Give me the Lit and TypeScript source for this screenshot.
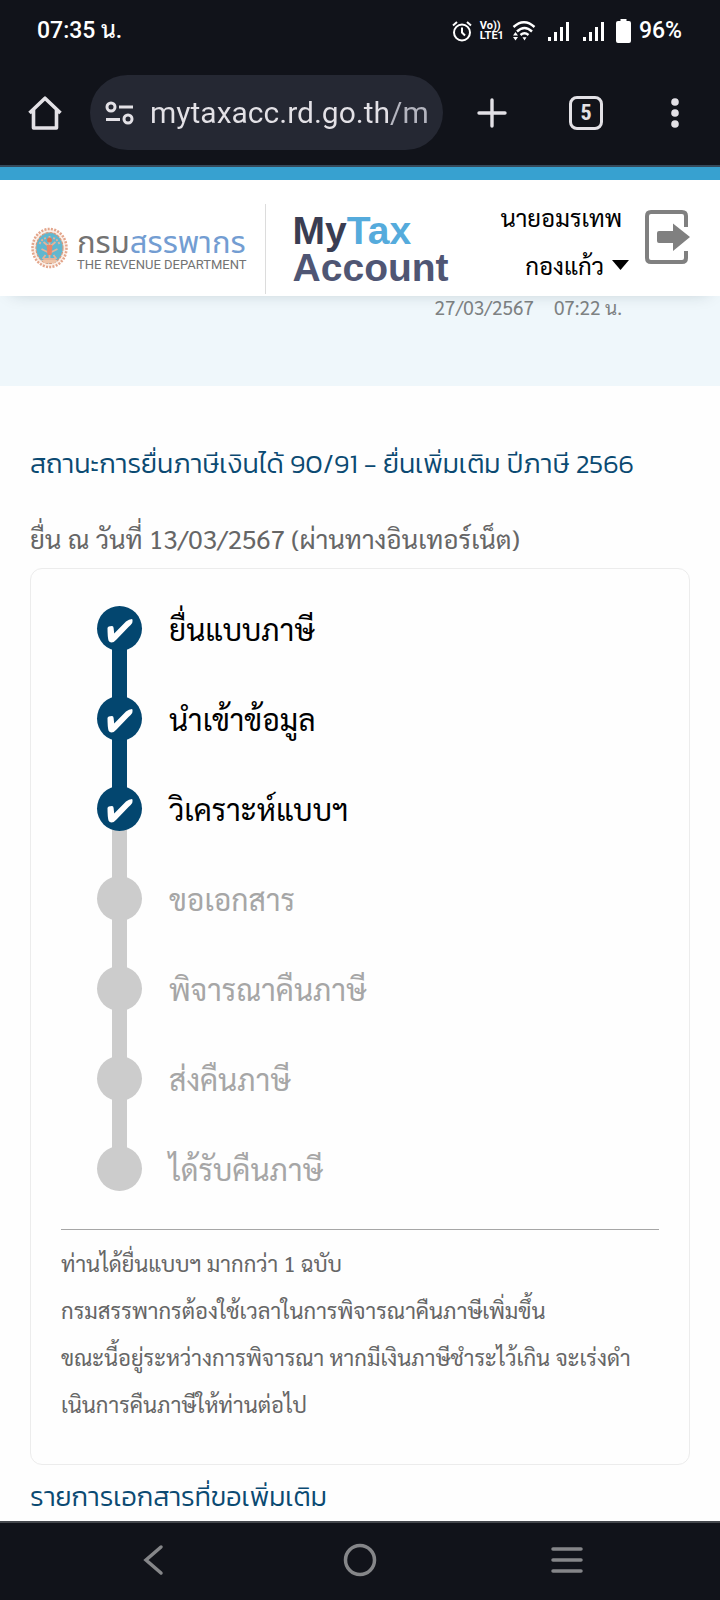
import { LitElement, html, css, svg, nothing } from "lit";
import { customElement, property } from "lit/decorators.js";
import { classMap } from "lit/directives/class-map.js";

const signal = () => svg`
  <rect x="0" y="15" width="3" height="4"></rect>
  <rect x="6" y="10" width="3" height="9"></rect>
  <rect x="12" y="5" width="3" height="14"></rect>
  <rect x="18" y="0" width="3" height="19"></rect>`;

@customElement("status-bar")
class StatusBar extends LitElement {
  static styles = css`
    :host {
      display: flex;
      align-items: center;
      height: 60px;
      padding: 2px 38px 0 37px;
      box-sizing: border-box;
      color: #fff;
      font: 500 23px/28px Roboto, "Sarabun", "Noto Sans Thai Looped", sans-serif;
    }
    .time { flex: 1; }
    .icons { display: flex; align-items: center; gap: 8px; }
    .pair { display: flex; gap: 14px; margin: 0 4px 0 4px; }
    svg { display: block; fill: #fff; }
    .line { fill: none; stroke: #fff; }
    .volte {
      display: grid;
      font: 700 11px/10px Roboto, sans-serif;
    }
  `;
  render() {
    return html`
      <span class="time">07:35 น.</span>
      <div class="icons">
        <svg class="line" width="20" height="21" viewBox="0 0 20 21" stroke-width="2">
          <circle cx="10" cy="11.5" r="8"></circle>
          <path d="M10 6.500v5l3 3M1 4.500 5 1M19 4.500 15 1"></path>
        </svg>
        <div class="volte"><span>Vo))</span><span>LTE1</span></div>
        <svg width="24" height="20" viewBox="0 0 24 20">
          <g fill="none" stroke="#fff" stroke-width="2.400">
            <path d="M1.500 6Q12-3.500 22.500 6M5 10.500Q12.500 3.500 20 10.500M8.500 14Q12.500 10.500 16.500 14"></path>
          </g>
          <path d="M10.500 16.200h4l-2 3.300zM1 14.500 3.500 11 6 14.500zM1 16 3.500 19.500 6 16z"></path>
        </svg>
        <div class="pair">
          <svg width="21" height="19" viewBox="0 0 21 19">${signal()}</svg>
          <svg width="21" height="19" viewBox="0 0 21 19">${signal()}</svg>
        </div>
        <svg width="15" height="24" viewBox="0 0 15 24"><path d="M4.500 0h6v2H13q2 0 2 2v18q0 2-2 2H2q-2 0-2-2V4q0-2 2-2h2.500z"></path></svg>
        <span>96%</span>
      </div>
    `;
  }
}

@customElement("browser-bar")
class BrowserBar extends LitElement {
  static styles = css`
    :host {
      display: flex;
      align-items: center;
      height: 107px;
      padding: 0 16px;
      box-sizing: border-box;
      border-bottom: 2px solid #35495a;
      background: #11131a;
    }
    button {
      flex: none;
      display: grid;
      place-items: center;
      padding: 0;
      border: 0;
      background: none;
      color: #e3e1e6;
    }
    .icon { width: 58px; height: 60px; }
    .tabs { margin: 0 43px 0 48px; }
    .count {
      display: grid;
      place-items: center;
      width: 34px;
      height: 34px;
      box-sizing: border-box;
      border: 3px solid #e3e1e6;
      border-radius: 8px;
      font: 700 22px/28px "Roboto Condensed", Roboto, sans-serif;
    }
    .address {
      flex: 1;
      min-width: 0;
      display: flex;
      align-items: center;
      gap: 16px;
      height: 75px;
      margin: 0 20px 0 16px;
      padding: 0 12px 0 15px;
      border-radius: 38px;
      background: #252833;
      box-sizing: border-box;
    }
    .address svg { flex: none; }
    input {
      flex: 1;
      min-width: 0;
      padding: 0;
      border: 0;
      outline: 0;
      height: 40px;
      font: 400 30px/40px Roboto, sans-serif;
      color: transparent;
      background: linear-gradient(90deg, #e3e1e6 240px, #b4b5bf 242px);
      background-clip: text;
      -webkit-background-clip: text;
    }
    svg { display: block; fill: none; stroke: #e3e1e6; stroke-width: 3; }
    .dots { fill: #e3e1e6; stroke: none; }
  `;
  render() {
    return html`
      <button class="icon" aria-label="หน้าแรก">
        <svg width="34" height="34" viewBox="0 0 34 34"><path stroke-width="3.600" d="M1.500 17 17 2.200 32.500 17M5.500 14v18h23V14" stroke-linejoin="round"></path></svg>
      </button>
      <div class="address">
        <svg width="29" height="24" viewBox="0 0 29 24">
          <circle cx="6" cy="6" r="4"></circle><path d="M14 6h14M1 18.500h14"></path><circle cx="23" cy="18" r="4"></circle>
        </svg>
        <input type="text" aria-label="ที่อยู่เว็บ" value="mytaxacc.rd.go.th/m" />
      </div>
      <button class="icon" aria-label="แท็บใหม่">
        <svg width="30" height="30" viewBox="0 0 30 30" stroke-linecap="round"><path stroke-width="3.400" d="M2 15h26M15 2v26"></path></svg>
      </button>
      <button class="tabs" aria-label="แท็บ"><span class="count">5</span></button>
      <button class="icon" aria-label="เมนู">
        <svg class="dots" width="8" height="30" viewBox="0 0 8 30"><circle cx="4" cy="4" r="3.800"></circle><circle cx="4" cy="15" r="3.800"></circle><circle cx="4" cy="26" r="3.800"></circle></svg>
      </button>
    `;
  }
}

@customElement("site-header")
class SiteHeader extends LitElement {
  static styles = css`
    :host {
      position: relative;
      display: flex;
      height: 129px;
      padding: 0 30px;
      box-sizing: border-box;
      border-top: 13px solid #37a1d0;
      background: #fff;
      box-shadow: 0 8px 16px -12px rgba(0, 40, 50, 0.25);
    }
    .brand { display: flex; align-items: center; gap: 8px; padding-top: 20px; }
    .names { display: grid; padding-top: 8px; }
    .thai {
      font: 400 31px/26px "Noto Sans Thai", sans-serif;
      color: #737373;
      white-space: nowrap;
    }
    .thai b { font-weight: 400; color: #739dd2; }
    .eng { font: 400 13px/16px Roboto, sans-serif; color: #737373; white-space: nowrap; }
    .product {
      margin: 24px 0 2px 18px;
      padding: 8px 0 0 27px;
      border-left: 1px solid #dcdcdc;
      font: 700 39px/37px "Liberation Sans", sans-serif;
      color: #4f5674;
    }
    .my { color: #3a3d52; }
    .tax { color: #55abdc; }
    .user {
      flex: 1;
      display: grid;
      justify-items: end;
      align-content: start;
      padding: 13px 0 0;
      border: 0;
      background: none;
      font: 400 24px/48px "Sarabun", "Noto Sans Thai Looped", "Noto Sans Thai", sans-serif;
      color: #000;
      white-space: nowrap;
    }
    .first { padding-right: 7px; }
    .last { display: flex; align-items: center; gap: 8px; }
    .exit { align-self: flex-start; padding: 30px 0 0; margin-left: 16px; border: 0; background: none; }
    svg { display: block; }
  `;
  render() {
    return html`
      <div class="brand">
        <svg width="39" height="42" viewBox="0 0 38 42">
          <ellipse cx="19" cy="21" rx="17" ry="19" fill="#fbeee6" stroke="#e3a58b" stroke-width="2.500" stroke-dasharray="2 1.300"></ellipse>
          <ellipse cx="19" cy="21" rx="13.500" ry="15.500" fill="#60b7d0" stroke="#d99a7c" stroke-width="1.200" stroke-dasharray="3 1"></ellipse>
          <g fill="none" stroke="#e5b39a" stroke-width="1.800">
            <path d="M19 9v22M13 15l6 5 6-5M11 22l8 4 8-4M13 32h12M15 28l-3 4M23 28l3 4"></path>
            <path d="M9 17q3-6 7-6M29 17q-3-6-7-6" stroke-dasharray="2 1.500"></path>
          </g>
          <circle cx="19" cy="13" r="2.500" fill="#d87a5b"></circle>
          <path d="M16 18h6l-1 10h-4z" fill="#e9876a"></path>
          <path d="M11 33h16l-3 3H14z" fill="#efc4a8"></path>
        </svg>
        <div class="names">
          <span class="thai">กรม<b>สรรพากร</b></span>
          <span class="eng">THE REVENUE DEPARTMENT</span>
        </div>
      </div>
      <div class="product"><span class="my">My</span><span class="tax">Tax</span><br />Account</div>
      <button class="user">
        <span class="first">นายอมรเทพ</span>
        <span class="last">กองแก้ว
          <svg width="17" height="10" viewBox="0 0 17 10"><path d="M0 0h17L8.500 10z"></path></svg>
        </span>
      </button>
      <button class="exit" aria-label="ออกจากระบบ">
        <svg width="45" height="54" viewBox="0 0 45 54">
          <path d="M41 17V6q0-4-4-4H6Q2 2 2 6v42q0 4 4 4h31q4 0 4-4V41" fill="none" stroke="#808080" stroke-width="4"></path>
          <path d="M14 21h14v-7.500L45 27 28 41v-8H14q-2 0-2-2v-8q0-2 2-2z" fill="#808080"></path>
        </svg>
      </button>
    `;
  }
}

@customElement("status-step")
class StatusStep extends LitElement {
  @property() label = "";
  @property({ type: Boolean }) done = false;
  @property({ type: Boolean }) linked = false;
  @property({ type: Boolean }) last = false;

  static styles = css`
    :host { display: flex; gap: 27px; }
    .rail { display: flex; flex-direction: column; align-items: center; width: 45px; }
    .dot {
      position: relative;
      z-index: 1;
      display: grid;
      place-items: center;
      width: 45px;
      height: 45px;
      border-radius: 50%;
      background: #ccc;
    }
    .link { width: 15px; height: 51px; margin: -3px 0; background: #ccc; }
    .done, .linked { background: #03466f; }
    .label {
      font: 400 30px/45px "Sarabun", "Noto Sans Thai Looped", "Noto Sans Thai", sans-serif;
      color: #a6a6a6;
    }
    .active { color: #000; }
  `;
  render() {
    return html`
      <div class="rail">
        <span class=${classMap({ dot: true, done: this.done })}>
          ${this.done
            ? html`<svg width="26" height="29" viewBox="0 -5 26 29"><path fill="#fff" d="M.5 9Q.8 7.200 5 7 6.500 7 6.600 9L7.200 14.500 19 2.500Q22 0 25 0 26 .5 25.200 4 24 6 21.500 8L9.500 20.500Q7 23.500 4.500 23.500 2.500 23.500 1.500 21.500.5 18 .5 9z"></path></svg>`
            : nothing}
        </span>
        ${this.last ? nothing : html`<span class=${classMap({ link: true, linked: this.linked })}></span>`}
      </div>
      <span class=${classMap({ label: true, active: this.done })}>${this.label}</span>
    `;
  }
}

@customElement("app-root")
class AppRoot extends LitElement {
  private steps = [
    { label: "ยื่นแบบภาษี", done: true },
    { label: "นำเข้าข้อมูล", done: true },
    { label: "วิเคราะห์แบบฯ", done: true },
    { label: "ขอเอกสาร", done: false },
    { label: "พิจารณาคืนภาษี", done: false },
    { label: "ส่งคืนภาษี", done: false },
    { label: "ได้รับคืนภาษี", done: false },
  ];

  static styles = css`
    :host {
      display: flex;
      flex-direction: column;
      min-height: 100vh;
      background: #11131a;
      --text: "Sarabun", "Noto Sans Thai Looped", "Noto Sans Thai", sans-serif;
      --head: "Kanit", "Prompt", "Noto Sans Thai", sans-serif;
    }
    .band {
      height: 90px;
      padding: 0 98px 0 30px;
      box-sizing: border-box;
      background: #eff7fb;
      color: #7e8283;
      font: 400 19px/22px var(--text);
      text-align: right;
    }
    .band time + time { margin-left: 20px; }
    main { flex: 1; padding: 0 30px; background: #fefefe; color: #666; }
    h1, h2 { margin: 0; color: #0b4a72; font: 300 27px/40px var(--head); }
    h1 { padding-top: 58px; }
    .filed { margin: 0; padding: 32px 0 8px; font: 400 26px/44px var(--text); }
    .card {
      padding: 37px 30px 36px;
      border: 1px solid #ececec;
      border-radius: 12px;
    }
    .steps { display: grid; margin: 0; padding: 0 0 0 36px; list-style: none; }
    hr { margin: 38px 0 10px; border: 0; border-top: 1px solid #a6a6a6; }
    .note { margin: 0; font: 400 22px/47px var(--text); }
    h2 { padding-top: 12px; }
    nav {
      display: flex;
      justify-content: space-around;
      align-items: center;
      height: 79px;
      padding: 0 50px 4px;
      box-sizing: border-box;
      border-top: 2px solid #45484d;
    }
    nav button { display: grid; place-items: center; width: 60px; height: 60px; padding: 0; border: 0; background: none; }
    nav svg { fill: none; stroke: #858689; stroke-width: 3.500; stroke-linecap: round; }
  `;

  render() {
    return html`
      <status-bar></status-bar>
      <browser-bar></browser-bar>
      <site-header></site-header>
      <div class="band"><time>27/03/2567</time><time>07:22 น.</time></div>
      <main>
        <h1>สถานะการยื่นภาษีเงินได้ 90/91 - ยื่นเพิ่มเติม ปีภาษี 2566</h1>
        <p class="filed">ยื่น ณ วันที่ 13/03/2567 (ผ่านทางอินเทอร์เน็ต)</p>
        <section class="card">
          <ol class="steps">
            ${this.steps.map(
              (s, i, all) => html`<li><status-step
                .label=${s.label}
                .done=${s.done}
                .linked=${s.done && !!all[i + 1]?.done}
                .last=${i === all.length - 1}
              ></status-step></li>`,
            )}
          </ol>
          <hr />
          <p class="note">ท่านได้ยื่นแบบฯ มากกว่า 1 ฉบับ<br />กรมสรรพากรต้องใช้เวลาในการพิจารณาคืนภาษีเพิ่มขึ้น<br />ขณะนี้อยู่ระหว่างการพิจารณา หากมีเงินภาษีชำระไว้เกิน จะเร่งดำ<br />เนินการคืนภาษีให้ท่านต่อไป</p>
        </section>
        <h2>รายการเอกสารที่ขอเพิ่มเติม</h2>
      </main>
      <nav>
        <button aria-label="ย้อนกลับ"><svg width="22" height="32" viewBox="0 0 22 32"><path d="M19 3 4 16l15 13"></path></svg></button>
        <button aria-label="หน้าหลัก"><svg width="34" height="34" viewBox="0 0 34 34"><circle cx="17" cy="17" r="14.500"></circle></svg></button>
        <button aria-label="แอปล่าสุด"><svg width="34" height="28" viewBox="0 0 34 28"><path d="M3 3h28M3 14h28M3 25h28"></path></svg></button>
      </nav>
    `;
  }
}
